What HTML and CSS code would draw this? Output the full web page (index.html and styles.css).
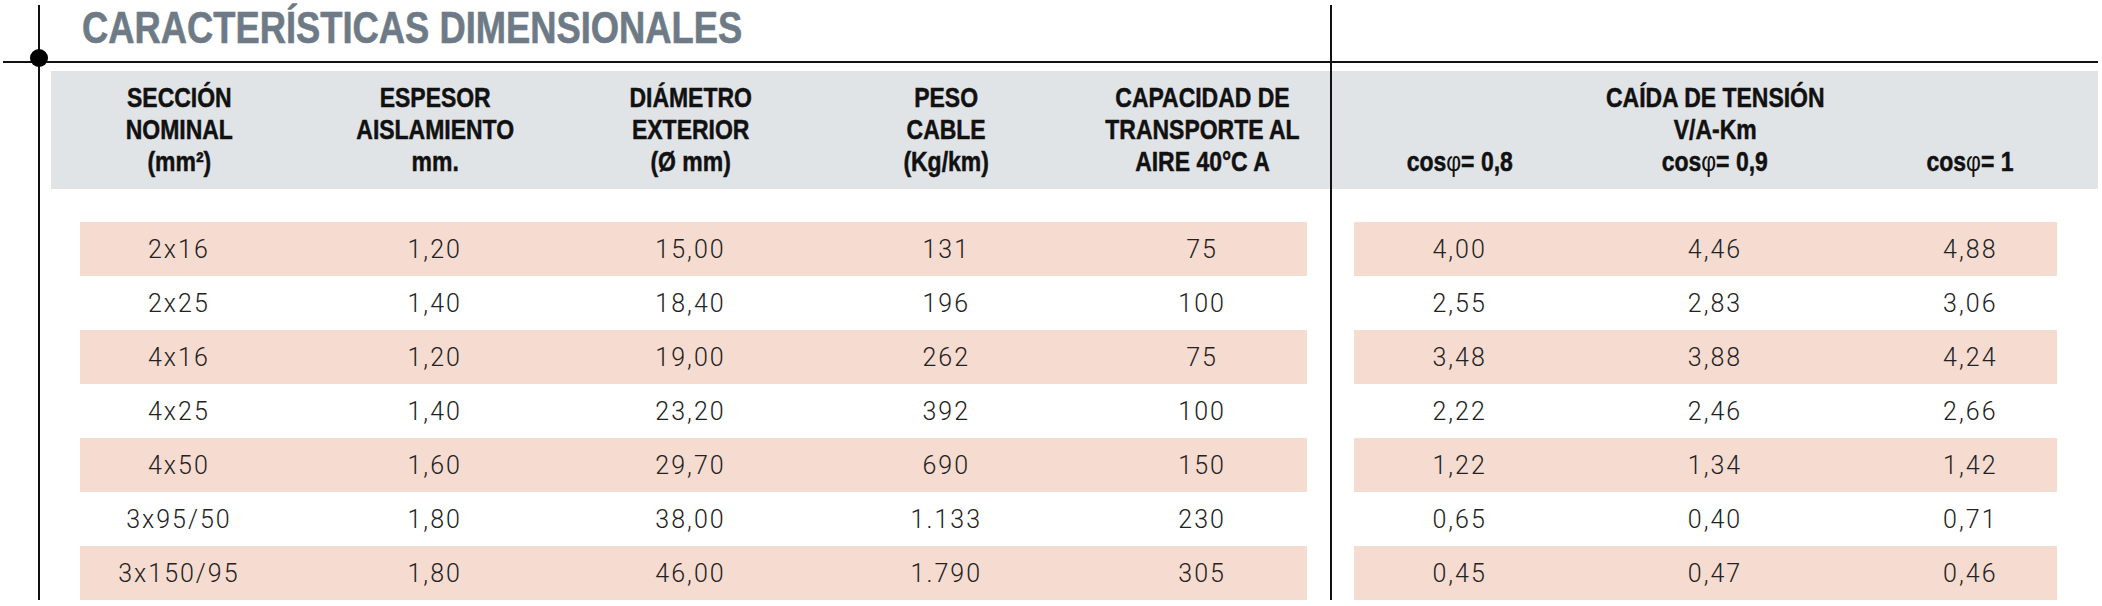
FILE: index.html
```html
<!DOCTYPE html>
<html lang="es">
<head>
<meta charset="utf-8">
<title>Características dimensionales</title>
<link rel="stylesheet" href="styles.css">
</head>
<body>
<div class="sheet">
  <span class="dot"></span>
  <section class="part part-left">
    <div class="title-row"><h1 class="title">CARACTERÍSTICAS DIMENSIONALES</h1></div>
    <div class="head head-left">
      <div class="hcell"><span class="nar">SECCIÓN<br>NOMINAL<br>(mm²)</span></div>
      <div class="hcell"><span class="nar">ESPESOR<br>AISLAMIENTO<br>mm.</span></div>
      <div class="hcell"><span class="nar">DIÁMETRO<br>EXTERIOR<br>(Ø mm)</span></div>
      <div class="hcell"><span class="nar">PESO<br>CABLE<br>(Kg/km)</span></div>
      <div class="hcell"><span class="nar">CAPACIDAD DE<br>TRANSPORTE AL<br>AIRE 40°C A</span></div>
    </div>
    <div class="body">
      <div class="row row-left alt"><span>2x16</span><span>1,20</span><span>15,00</span><span>131</span><span>75</span></div>
      <div class="row row-left"><span>2x25</span><span>1,40</span><span>18,40</span><span>196</span><span>100</span></div>
      <div class="row row-left alt"><span>4x16</span><span>1,20</span><span>19,00</span><span>262</span><span>75</span></div>
      <div class="row row-left"><span>4x25</span><span>1,40</span><span>23,20</span><span>392</span><span>100</span></div>
      <div class="row row-left alt"><span>4x50</span><span>1,60</span><span>29,70</span><span>690</span><span>150</span></div>
      <div class="row row-left"><span>3x95/50</span><span>1,80</span><span>38,00</span><span>1.133</span><span>230</span></div>
      <div class="row row-left alt"><span>3x150/95</span><span>1,80</span><span>46,00</span><span>1.790</span><span>305</span></div>
    </div>
  </section>
  <section class="part part-right">
    <div class="title-row"></div>
    <div class="head head-right">
      <div class="hspan"><span class="nar">CAÍDA DE TENSIÓN<br>V/A-Km</span></div>
      <div class="cos-row">
        <div><span class="nar">cos<span class="phi">φ</span>= 0,8</span></div>
        <div><span class="nar">cos<span class="phi">φ</span>= 0,9</span></div>
        <div><span class="nar">cos<span class="phi">φ</span>= 1</span></div>
      </div>
    </div>
    <div class="body">
      <div class="row row-right alt"><span>4,00</span><span>4,46</span><span>4,88</span></div>
      <div class="row row-right"><span>2,55</span><span>2,83</span><span>3,06</span></div>
      <div class="row row-right alt"><span>3,48</span><span>3,88</span><span>4,24</span></div>
      <div class="row row-right"><span>2,22</span><span>2,46</span><span>2,66</span></div>
      <div class="row row-right alt"><span>1,22</span><span>1,34</span><span>1,42</span></div>
      <div class="row row-right"><span>0,65</span><span>0,40</span><span>0,71</span></div>
      <div class="row row-right alt"><span>0,45</span><span>0,47</span><span>0,46</span></div>
    </div>
  </section>
</div>
</body>
</html>
```
FILE: styles.css
```css
html, body {
  margin: 0;
  padding: 0;
  background: #ffffff;
}

.sheet {
  position: relative;
  display: flex;
  margin-left: 3px;
  padding-top: 5px;
  width: 2095px;
  height: 595px;
  overflow: hidden;
}

.dot {
  position: absolute;
  left: 27px;
  top: 49px;
  width: 18px;
  height: 18px;
  border-radius: 50%;
  background: #000;
}

.part {
  display: flex;
  flex-direction: column;
}

.part-left {
  width: 1327px;
  background: linear-gradient(#111, #111) no-repeat 35px 0 / 2px 100%;
}

.part-right {
  width: 766px;
  border-left: 2px solid #111;
}

.title-row {
  height: 56px;
  border-bottom: 2px solid #111;
  box-sizing: content-box;
}

.title {
  display: inline-block;
  margin: 0 0 0 79px;
  padding-top: 1px;
  font-family: "Liberation Sans", Arial, sans-serif;
  font-weight: 700;
  font-size: 44px;
  line-height: 44px;
  color: #6e7b86;
  white-space: nowrap;
  -webkit-text-stroke: 0.6px #6e7b86;
  transform: scaleX(0.826);
  transform-origin: left center;
}

.head {
  margin-top: 8px;
  height: 118px;
  background: #e1e4e7;
  box-sizing: border-box;
  padding-top: 11px;
  font-family: "Liberation Sans", Arial, sans-serif;
  font-weight: 700;
  font-size: 28px;
  line-height: 32px;
  color: #111;
  text-align: center;
}

.nar {
  display: inline-block;
  white-space: nowrap;
  -webkit-text-stroke: 0.5px #111;
  transform: scaleX(0.82);
  transform-origin: center;
}

.phi {
  font-weight: 400;
  -webkit-text-stroke: 0;
}

.head-left {
  margin-left: 48px;
  display: grid;
  grid-template-columns: repeat(5, 1fr);
}

.head-right {
  display: flex;
  flex-direction: column;
}

.cos-row {
  display: grid;
  grid-template-columns: repeat(3, 1fr);
}

.body {
  margin-top: 33px;
  display: flex;
  flex-direction: column;
}

.row {
  height: 54px;
  display: grid;
  align-items: center;
  text-align: center;
  font-family: "Roboto", "Liberation Sans", sans-serif;
  font-weight: 300;
  font-size: 25px;
  letter-spacing: 2px;
  color: #222;
}

.row-left {
  margin-left: 48px;
  grid-template-columns: repeat(5, 1fr);
}

.row-left.alt {
  background: linear-gradient(#f6dbd0, #f6dbd0) no-repeat 29px 0 / 1227px 100%;
}

.row-right {
  grid-template-columns: repeat(3, 1fr);
}

.row-right.alt {
  background: linear-gradient(#f6dbd0, #f6dbd0) no-repeat 22px 0 / 703px 100%;
}
```
